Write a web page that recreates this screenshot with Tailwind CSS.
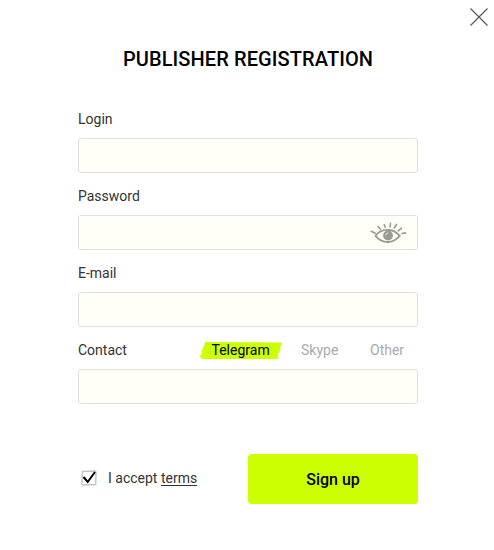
<!DOCTYPE html>
<html lang="en">
<head>
<meta charset="utf-8">
<title>Publisher registration</title>
<script src="https://cdn.jsdelivr.net/npm/@tailwindcss/browser@4"></script>
</head>
<body class="bg-white font-['Roboto',sans-serif] text-sm text-[#333]">
<main class="relative h-[550px] w-[494px] overflow-hidden px-[78px] pt-[45px]">
  <button class="absolute left-[470px] top-2" aria-label="Close">
    <svg class="block" width="18" height="18" viewBox="0 0 18 18" fill="none" stroke="#555" stroke-width="1.100"><path d="M.5.5l17 17M17.500.5l-17 17"/></svg>
  </button>
  <h1 class="-mr-4 -ml-[14px] text-center text-xl leading-7 font-medium tracking-[0.1px] whitespace-nowrap text-black">PUBLISHER REGISTRATION</h1>
  <form class="mt-9 w-[340px]">
    <div class="flex h-[77px] flex-col">
      <label class="h-[29px] leading-5">Login</label>
      <div class="h-[35px] rounded-[3px] border border-[#e0e0e0] bg-[#fffff7]"></div>
    </div>
    <div class="flex h-[77px] flex-col">
      <label class="h-[29px] leading-5">Password</label>
      <div class="flex h-[35px] items-center justify-end rounded-[3px] border border-[#e0e0e0] bg-[#fffff7] pt-[2px] pr-[10px]">
        <svg width="37" height="23" viewBox="0 0 37 23" fill="none" stroke="#999b94" stroke-linecap="round">
          <path d="M5.500 13.800C9 9.200 14 7.500 19 8c5 .4 8.500 3.200 10.700 5.800C25.500 18.500 22 20.200 17.500 20 12.500 19.800 8.500 17.500 5.500 13.800Z" stroke-width="1.900"/>
          <circle cx="18" cy="13.500" r="4.900" fill="#999b94" stroke="none"/>
          <path d="M15.800 13q.2-1.800 2-2" stroke="#e8e8e0" stroke-width="1"/>
          <path d="M1.200 9.300l4 2M8 4.500l2.500 2.800M14.200 2.700l1 2.500M20.500 1.300l-.5 3.500M26.600 2.300l-2.400 3.700M31.500 6.200l-3.200 2.600M35.500 10.900l-3.500.6" stroke-width="1.600"/>
        </svg>
      </div>
    </div>
    <div class="flex h-[77px] flex-col">
      <label class="h-[29px] leading-5">E-mail</label>
      <div class="h-[35px] rounded-[3px] border border-[#e0e0e0] bg-[#fffff7]"></div>
    </div>
    <div class="flex h-[114px] flex-col">
      <div class="flex h-[29px] items-start leading-5">
        <span class="w-[122px]">Contact</span>
        <span class="relative w-[82px] pl-[11.500px] text-black">
          <svg class="absolute top-[2px] left-0" width="82" height="18" viewBox="0 0 82 18" fill="#cf0"><path d="M5 0L81 .4 82 1.500 80 5.500 80.500 7 78 12 78.500 16 76 17 4 17 1 16.500 0 14 2 11 1.500 9.500 4 4Z"/></svg>
          <span class="relative">Telegram</span>
        </span>
        <span class="ml-[19px] w-[69px] text-[#aaa]">Skype</span>
        <span class="text-[#aaa]">Other</span>
      </div>
      <div class="h-[35px] rounded-[3px] border border-[#e0e0e0] bg-[#fffff7]"></div>
    </div>
    <div class="flex h-[50px] items-center justify-between">
      <div class="flex items-center pb-[2px] pl-[3px] leading-5">
        <svg class="mr-[11px]" width="16" height="16" viewBox="0 0 16 16" fill="none">
          <path d="M1.500 1.500L14 1 15 2 14.700 14.500 2 15 .9 14Z" stroke="#c4c4c4" stroke-width="1.500"/>
          <path d="M2.500 7L6.700 12 14 2" stroke="#000" stroke-width="2"/>
        </svg>
        <span>I accept <a class="underline underline-offset-2">terms</a></span>
      </div>
      <button type="button" class="h-[50px] w-[170px] rounded-[4px] bg-[#cf0] pt-[2px] text-base font-medium text-black">Sign up</button>
    </div>
  </form>
</main>
</body>
</html>
